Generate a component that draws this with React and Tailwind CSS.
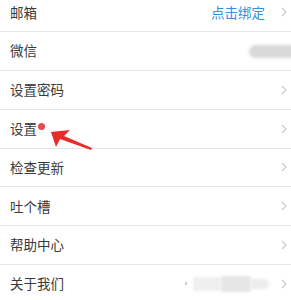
import React from "react";

const Chevron = () => (
  <svg width="6" height="10" viewBox="0 0 6 10" className="shrink-0">
    <path d="M1 1 L5 5 L1 9" fill="none" stroke="#c9c9c9" strokeWidth="1.1" />
  </svg>
);

const Row = ({ label, right, dot, noChevron }) => (
  <div className="relative flex h-[38.8px] items-center border-b border-[#e6e6e6] pl-[10px] pr-[4px]">
    <span className="text-[13.5px] leading-none text-[#3a3a3a]">{label}</span>
    {dot && <span className="ml-[1px] mb-[4px] h-[7px] w-[7px] rounded-full bg-[#e64a4f]" />}
    <div className="flex-1" />
    {right}
    {!noChevron && <Chevron />}
  </div>
);

export default function App() {
  return (
    <div
      className="relative h-[300px] w-[291px] overflow-hidden bg-white"
      style={{ fontFamily: '"Noto Sans CJK SC", "Noto Sans", sans-serif' }}
    >
      <div className="mt-[-6.6px]">
        <Row
          label="邮箱"
          right={<span className="mr-[16px] text-[13.5px] leading-none text-[#3a8de0]">点击绑定</span>}
        />
        <Row
          label="微信"
          noChevron
          right={
            <div className="mr-[-8px] h-[13px] w-[46px] rounded-l-full bg-[#d9d9d9] blur-[1.5px]" />
          }
        />
        <Row label="设置密码" />
        <Row label="设置" dot />
        <Row label="检查更新" />
        <Row label="吐个槽" />
        <Row label="帮助中心" />
        <Row
          label="关于我们"
          right={
            <div className="mr-[12px] flex items-center">
              <div className="mr-[6px] h-[3px] w-[2px] bg-[#cfcfcf]" />
              <div className="h-[14px] w-[28px] bg-[#efefef] blur-[1.5px]" />
              <div className="h-[16px] w-[30px] bg-[#e6e6e6] blur-[1.5px]" />
              <div className="h-[10px] w-[18px] rounded-r-full bg-[#ececec] blur-[1.5px]" />
            </div>
          }
        />
      </div>
      <svg
        className="pointer-events-none absolute left-0 top-0"
        width="291"
        height="300"
        viewBox="0 0 291 300"
      >
        <path
          d="M51 132 L70 130 L64 136 L92 148 L91 150 L60 139 L56 147 Z"
          fill="#ea2b2b"
        />
      </svg>
    </div>
  );
}
